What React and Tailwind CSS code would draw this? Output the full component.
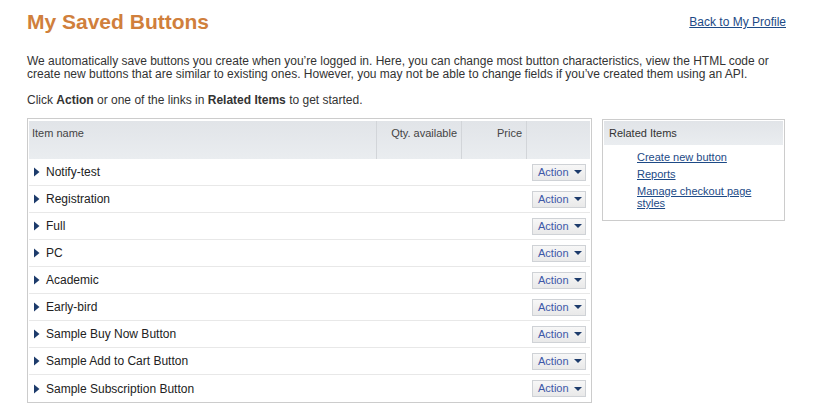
import React from 'react';

const items = [
  'Notify-test',
  'Registration',
  'Full',
  'PC',
  'Academic',
  'Early-bird',
  'Sample Buy Now Button',
  'Sample Add to Cart Button',
  'Sample Subscription Button',
];

const relatedLinks = ['Create new button', 'Reports', 'Manage checkout page styles'];

const ExpandArrow = () => (
  <svg width="6" height="10" viewBox="0 0 6 10" className="shrink-0">
    <path d="M0 0.5 L5.5 5 L0 9.5 Z" fill="#1d3b6b" />
  </svg>
);

const ActionButton = () => (
  <button className="flex items-center gap-[5px] h-[17px] w-[54px] pl-[5px] border border-[#cfd2d6] bg-gradient-to-b from-[#f7f7f7] to-[#e9e9e9] text-[11px] leading-none text-[#3d58a8]">
    <span>Action</span>
    <svg width="8" height="4" viewBox="0 0 8 4">
      <path d="M0 0 L8 0 L4 4 Z" fill="#1d3b6b" />
    </svg>
  </button>
);

export default function App() {
  return (
    <div className="w-[827px] h-[410px] overflow-hidden bg-white px-[27px] pt-[10px] text-[#333] font-['Liberation_Sans',Arial,sans-serif]">
      <div className="flex justify-between items-start w-[759px]">
        <h1 className="text-[21px] leading-6 font-bold text-[#d07f3c]">My Saved Buttons</h1>
        <a href="#" className="mt-[5px] text-[12px] leading-[14px] text-[#1d4a86] underline">
          Back to My Profile
        </a>
      </div>

      <p className="mt-[21px] text-[12px] leading-[13px] w-[765px]">
        We automatically save buttons you create when you’re logged in. Here, you can change most button characteristics, view the HTML code or create new buttons that are similar to existing ones. However, you may not be able to change fields if you’ve created them using an API.
      </p>
      <p className="mt-[13px] text-[12px] leading-[13px]">
        Click <b>Action</b> or one of the links in <b>Related Items</b> to get started.
      </p>

      <div className="flex items-start gap-[10px] mt-[11px]">
        {/* items table */}
        <div className="w-[565px] border border-[#cccccc] pt-[2px] px-px">
          <div className="flex h-[38px] bg-gradient-to-b from-[#e1e4e8] to-[#eaedf0] text-[11px] leading-[13px] text-[#444]">
            <div className="w-[347px] pl-[3px] pt-[6px]">Item name</div>
            <div className="w-[85px] border-l border-[#d2d5d9] pr-[4px] pt-[6px] text-right">Qty. available</div>
            <div className="w-[65px] border-l border-[#d2d5d9] pr-[4px] pt-[6px] text-right">Price</div>
            <div className="flex-1 border-l border-[#d2d5d9]" />
          </div>
          {items.map((name, i) => (
            <div
              key={name}
              className={`flex items-center h-[27px] ${i < items.length - 1 ? 'border-b border-[#e8e8e8]' : ''}`}
            >
              <div className="flex items-center gap-[6px] w-[497px] pl-[5px] text-[12px] text-[#222]">
                <ExpandArrow />
                <span>{name}</span>
              </div>
              <div className="pl-[6px]">
                <ActionButton />
              </div>
            </div>
          ))}
        </div>

        {/* related items */}
        <div className="w-[183px] mt-px border border-[#cccccc] pt-[1px] px-px pb-[11px]">
          <div className="flex items-center h-[24px] pl-[5px] bg-gradient-to-b from-[#e1e4e8] to-[#eaedf0] text-[11px] text-[#333]">
            Related Items
          </div>
          <ul className="mt-[6px] pl-[33px] pr-[10px] flex flex-col gap-[5px] text-[11px] leading-[12px]">
            {relatedLinks.map((link) => (
              <li key={link}>
                <a href="#" className="text-[#1d4a86] underline">
                  {link}
                </a>
              </li>
            ))}
          </ul>
        </div>
      </div>
    </div>
  );
}
